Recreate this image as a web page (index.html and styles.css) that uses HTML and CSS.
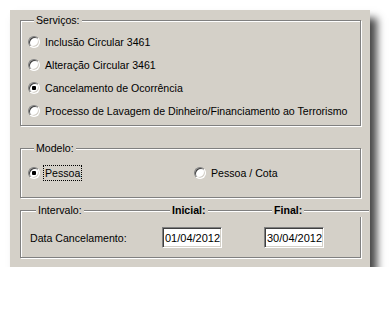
FILE: index.html
```html
<!DOCTYPE html>
<html lang="pt">

<head>
    <meta charset="UTF-8">
    <title>Serviços</title>
    <link rel="stylesheet" href="styles.css">
</head>

<body>
    <div class="panel">
        <fieldset class="group services">
            <legend>Serviços:</legend>
            <label class="opt"><input type="radio" name="servico"><span>Inclusão Circular 3461</span></label>
            <label class="opt"><input type="radio" name="servico"><span>Alteração Circular 3461</span></label>
            <label class="opt"><input type="radio" name="servico" checked><span>Cancelamento de Ocorrência</span></label>
            <label class="opt"><input type="radio" name="servico"><span>Processo de Lavagem de Dinheiro/Financiamento ao Terrorismo</span></label>
        </fieldset>

        <fieldset class="group model">
            <legend>Modelo:</legend>
            <div class="model-row">
                <label class="opt"><input type="radio" name="modelo" checked><span class="focus">Pessoa</span></label>
                <label class="opt"><input type="radio" name="modelo"><span>Pessoa / Cota</span></label>
            </div>
        </fieldset>

        <fieldset class="group range">
            <legend class="range-head">
                <span class="head-col"><span class="head-text">Intervalo:</span><span class="rule"></span></span>
                <span class="head-col"><span class="head-text bold">Inicial:</span><span class="rule"></span></span>
                <span class="head-col"><span class="head-text bold">Final:</span><span class="rule"></span></span>
            </legend>
            <div class="range-row">
                <span>Data Cancelamento:</span>
                <span><input class="field" type="text" value="01/04/2012"></span>
                <span><input class="field" type="text" value="30/04/2012"></span>
            </div>
        </fieldset>
    </div>
</body>

</html>
```

FILE: styles.css
```css
* {
    margin: 0;
    padding: 0;
    box-sizing: border-box;
}

body {
    background: #fff;
    font-family: "Liberation Sans", Arial, sans-serif;
    font-size: 10.6px;
    color: #000;
}

.panel {
    width: 360px;
    height: 257px;
    margin: 10px 0 0 10px;
    padding: 4px 9px 0 10px;
    background: #d4d0c8;
    box-shadow: 7px 8px 8px rgba(0, 0, 0, 0.72);
    display: flex;
    flex-direction: column;
}

.group {
    border: 1px solid #808080;
    box-shadow: inset 1px 1px #fff, 1px 1px #fff;
    min-width: 0;
}

.group legend {
    margin-left: 6px;
    padding: 0 2px;
    line-height: 13px;
    background: #d4d0c8;
}

.services {
    padding: 3px 0 3px 7px;
}

.model {
    margin-top: 16px;
    padding: 6px 0 13px 7px;
}

.range {
    margin-top: 6px;
    padding: 10px 0 9px 9px;
}

.opt {
    display: flex;
    align-items: center;
    height: 23px;
    gap: 5px;
}

.opt input {
    appearance: none;
    width: 12px;
    height: 12px;
    border-radius: 50%;
    border: 1px solid;
    border-color: #808080 #fff #fff #808080;
    box-shadow: inset 1px 1px #404040, inset -1px -1px #d4d0c8;
    background: #fff;
    flex: none;
}

.opt input:checked {
    background: radial-gradient(circle, #000 2px, #fff 2.5px);
}

.focus {
    outline: 1px dotted #000;
    outline-offset: 1px;
}

.model-row {
    display: grid;
    grid-template-columns: 166px auto;
}

.range-head {
    width: 333px;
    display: grid;
    grid-template-columns: 134px 102px 97px;
    padding: 0 !important;
}

.head-col {
    display: flex;
}

.head-text {
    padding: 0 2px;
}

.bold {
    font-weight: bold;
}

.rule {
    flex: 1;
    height: 2px;
    margin-top: 6px;
    border-top: 1px solid #808080;
    border-bottom: 1px solid #fff;
}

.range-row {
    display: grid;
    grid-template-columns: 132px 102px auto;
    align-items: center;
    height: 21px;
}

.field {
    width: 60px;
    height: 21px;
    padding: 0 0 0 2px;
    font-family: "Liberation Sans", Arial, sans-serif;
    font-size: 11px;
    color: #000;
    background: #fff;
    border: 1px solid;
    border-color: #808080 #fff #fff #808080;
    box-shadow: inset 1px 1px #404040, inset -1px -1px #d4d0c8;
    outline: none;
}
```
